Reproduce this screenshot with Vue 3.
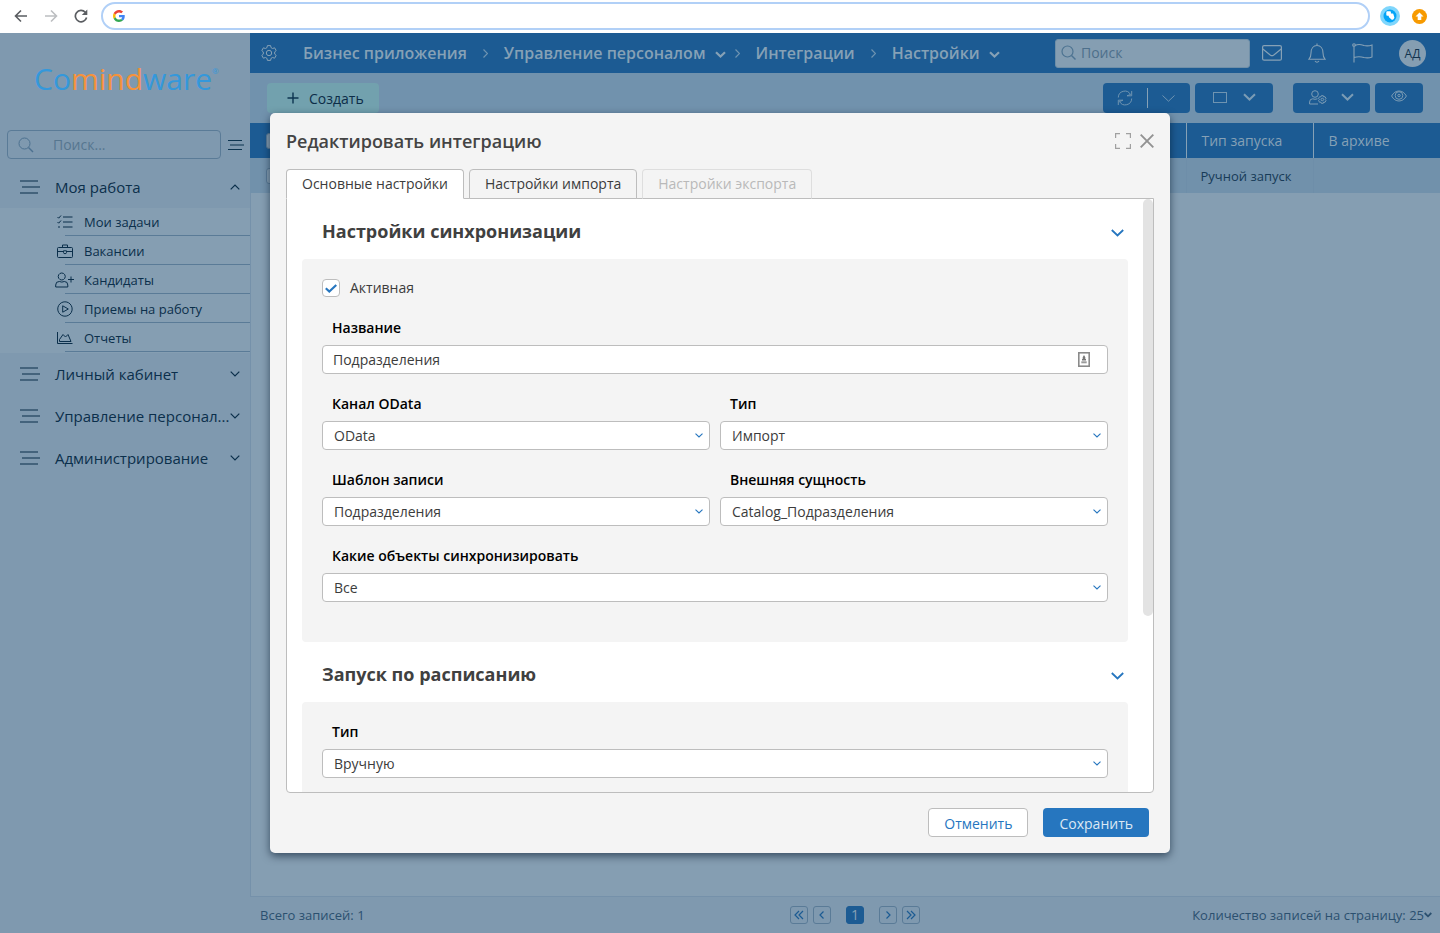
<script setup>
import { ref } from 'vue'

const navSearch = ref('')
const topSearch = ref('')
const active = ref(true)
const name = ref('Подразделения')

const tasks = [
  { icon: 'list', title: 'Мои задачи' },
  { icon: 'case', title: 'Вакансии' },
  { icon: 'user', title: 'Кандидаты' },
  { icon: 'play', title: 'Приемы на работу' },
  { icon: 'chart', title: 'Отчеты' },
]
const groups = ['Личный кабинет', 'Управление персонал...', 'Администрирование']
const crumbs = [
  { title: 'Бизнес приложения', menu: false },
  { title: 'Управление персоналом', menu: true },
  { title: 'Интеграции', menu: false },
  { title: 'Настройки', menu: true },
]
const selects = [
  { id: 'channel', label: 'Канал OData', value: 'OData', wide: false },
  { id: 'direction', label: 'Тип', value: 'Импорт', wide: false },
  { id: 'template', label: 'Шаблон записи', value: 'Подразделения', wide: false },
  { id: 'entity', label: 'Внешняя сущность', value: 'Catalog_Подразделения', wide: false },
  { id: 'objects', label: 'Какие объекты синхронизировать', value: 'Все', wide: true },
]
</script>

<template>
  <div class="page">
    <div class="browser">
      <button class="nav-btn" aria-label="Назад">
        <svg width="14" height="14" viewBox="0 0 14 14"><path d="M13 7H1.5M7 1.5L1.5 7L7 12.5" stroke="#5a5d61" stroke-width="1.6" /></svg>
      </button>
      <button class="nav-btn" aria-label="Вперед">
        <svg width="14" height="14" viewBox="0 0 14 14"><path d="M1 7h11.500M7 1.500L12.500 7L7 12.500" stroke="#bcbec1" stroke-width="1.600" /></svg>
      </button>
      <button class="nav-btn" aria-label="Обновить">
        <svg width="14" height="14" viewBox="0 0 14 14"><path d="M12.600 8.500A5.700 5.700 0 1 1 11.300 3.200" stroke="#5a5d61" stroke-width="1.700" /><path d="M13.300 0.500V6H7.800z" fill="#5a5d61" /></svg>
      </button>
      <div class="address">
        <svg width="12" height="12" viewBox="0 0 48 48">
          <path fill="#EA4335" d="M24 9.500c3.540 0 6.710 1.220 9.210 3.600l6.850-6.850C35.900 2.380 30.470 0 24 0 14.620 0 6.510 5.380 2.560 13.220l7.980 6.190C12.430 13.720 17.740 9.500 24 9.500z" />
          <path fill="#4285F4" d="M46.980 24.550c0-1.570-.15-3.090-.38-4.550H24v9.020h12.940c-.58 2.960-2.260 5.480-4.780 7.180l7.730 6c4.510-4.180 7.090-10.360 7.090-17.650z" />
          <path fill="#FBBC05" d="M10.530 28.590c-.48-1.450-.76-2.990-.76-4.590s.27-3.140.76-4.590l-7.980-6.190C.92 16.460 0 20.120 0 24c0 3.880.92 7.540 2.560 10.780l7.970-6.190z" />
          <path fill="#34A853" d="M24 48c6.480 0 11.930-2.130 15.890-5.810l-7.730-6c-2.150 1.450-4.920 2.300-8.160 2.300-6.260 0-11.570-4.220-13.470-9.910l-7.980 6.190C6.510 42.620 14.620 48 24 48z" />
        </svg>
        <input aria-label="Адресная строка" type="text" />
      </div>
      <svg class="ext" width="20" height="20" viewBox="0 0 20 20"><circle cx="10" cy="10" r="10" fill="#7fd6fc" /><circle cx="10" cy="10" r="6.500" fill="#03a5f7" /><path d="M6.300 6q.2-.8 1-.8h2.800q.8.200.8 1v1.200h1.600q1 .1 1 1l.9 3.200q-.2 1.200-1.200 1.800-1.200.8-2-.2L9 11.300 8.600 9.800H7.300q-1-.2-1-1z" fill="#fff" /></svg>
      <svg class="ext" width="15" height="15" viewBox="0 0 15 15"><circle cx="7.500" cy="7.500" r="7.500" fill="#f79a00" /><path d="M7.500 3.500l4 4H9.300v3.500H5.700V7.500H3.500z" fill="#fff" /></svg>
    </div>

    <div class="app">
      <aside class="sidebar">
        <div class="logo">Co<span>mind</span>ware<sup>®</sup></div>
        <div class="side-search">
          <label class="side-box">
            <svg width="16" height="16" viewBox="0 0 16 16"><circle cx="6.500" cy="6.500" r="5.500" stroke="#4c7190" /><path d="M10.500 10.500L15 15" stroke="#4c7190" stroke-width="1.400" /></svg>
            <input v-model="navSearch" type="text" placeholder="Поиск..." aria-label="Поиск по меню" />
          </label>
          <button aria-label="Свернуть меню">
            <svg width="16" height="12" viewBox="0 0 16 12"><path d="M0 1.500h14M2 6h14M0 10.500h14" stroke="#0c3450" stroke-width="1.100" /></svg>
          </button>
        </div>
        <nav>
          <button class="group">
            <svg width="20" height="14" viewBox="0 0 20 14"><path d="M0 1h18M2 7h18M0 13h18" stroke="#0b2f4b" stroke-width="1.100" /></svg>
            <span>Моя работа</span>
            <svg width="10" height="6" viewBox="0 0 10 6"><path d="M.7 5.300L5 1l4.300 4.300" stroke="#0b2f4b" stroke-width="1.200" /></svg>
          </button>
          <ul class="sub">
            <li v-for="t in tasks" :key="t.title">
              <a href="#">
                <svg width="20" height="16" viewBox="0 0 20 16" stroke="#0b2f4b">
                  <path v-if="t.icon === 'list'" d="M2.500 3l1.200 1.200L6 1.500M2.500 8l1.200 1.200L6 6.500M3 13h2M8 3h9.500M8 8h9.500M8 13h9.500" />
                  <path v-else-if="t.icon === 'case'" d="M3.500 4.500h13a1 1 0 0 1 1 1v8a1 1 0 0 1-1 1h-13a1 1 0 0 1-1-1v-8a1 1 0 0 1 1-1zM7.500 4.500V2h5v2.500M2.500 8.500h6m3 0h6M8.500 7.800v1.700a1.500 1.200 0 0 0 3 0V7.800z" />
                  <path v-else-if="t.icon === 'user'" d="M6.800 1a3.500 3.500 0 1 1-.1 0zM.7 15v-2a3.500 3.500 0 0 1 3.600-3.500l2.500.6 2.500-.6A3.500 3.500 0 0 1 12.800 13v2zM16 4.500v6M13 7.500h6" />
                  <path v-else-if="t.icon === 'play'" d="M10 .8a7.200 7.200 0 1 1-.1 0zM7.700 4.800v6.400L13.300 8z" />
                  <path v-else d="M2.500 2v11.500h15M4.500 11.500V9.500l3.500-5 2.500 2.500 2.500-2.500 3 7z" />
                </svg>
                {{ t.title }}
              </a>
            </li>
          </ul>
          <button v-for="g in groups" :key="g" class="group">
            <svg width="20" height="14" viewBox="0 0 20 14"><path d="M0 1h18M2 7h18M0 13h18" stroke="#0b2f4b" stroke-width="1.100" /></svg>
            <span>{{ g }}</span>
            <svg width="10" height="6" viewBox="0 0 10 6"><path d="M.7.700L5 5 9.300.7" stroke="#0b2f4b" stroke-width="1.200" /></svg>
          </button>
        </nav>
      </aside>

      <main class="main">
        <header class="top">
          <svg class="gear" width="16" height="16" viewBox="0 0 16 16" stroke="#86a1b6"><circle cx="8" cy="8" r="2.700" /><path d="M6.400.6h3.200l.4 2 1.600.9 2-.7 1.600 2.800-1.500 1.300v2.200l1.500 1.300-1.600 2.800-2-.7-1.600.9-.4 2H6.400l-.4-2-1.600-.9-2 .7L.8 10.400l1.500-1.300V6.900L.8 5.600l1.600-2.800 2 .7L6 2.600z" /></svg>
          <nav class="crumbs">
            <template v-for="(c, i) in crumbs" :key="c.title">
              <svg v-if="i" class="sep" :class="{ tight: crumbs[i - 1].menu }" width="5" height="9" viewBox="0 0 5 9"><path d="M.5.500l4 4-4 4" stroke="#6f94b1" stroke-width="1.200" /></svg>
              <a href="#">{{ c.title }}</a>
              <svg v-if="c.menu" class="drop" width="11" height="7" viewBox="0 0 11 7"><path d="M1 1.200l4.500 4.300L10 1.200" stroke="#86a1b6" stroke-width="2.200" /></svg>
            </template>
          </nav>
          <label class="top-search">
            <svg width="16" height="16" viewBox="0 0 16 16"><circle cx="6.500" cy="6.500" r="5.500" stroke="#4d7391" stroke-width="1.200" /><path d="M10.500 10.500L14.500 14.500" stroke="#4d7391" stroke-width="1.500" /></svg>
            <input v-model="topSearch" type="text" placeholder="Поиск" aria-label="Поиск" />
          </label>
          <div class="top-icons">
            <button aria-label="Почта"><svg width="20" height="16" viewBox="0 0 20 16" stroke="#86a1b6" stroke-width="1.200"><rect x=".6" y=".6" width="18.800" height="14.600" rx="1.500" /><path d="M.8 4l7.700 6.200q1.500 1 3 0L19.200 4" /></svg></button>
            <button aria-label="Уведомления"><svg width="18" height="20" viewBox="0 0 18 20" stroke="#86a1b6" stroke-width="1.100"><path d="M9 .5v2M1 16.200c2-2.200 2-3 2-6.200C3 5.500 5.500 2.500 9 2.500s6 3 6 7.500c0 3.200 0 4 2 6.200zM7 18q2 2.500 4 0" /></svg></button>
            <button aria-label="Флаг"><svg width="21" height="20" viewBox="0 0 21 20" stroke="#86a1b6" stroke-width="1.100"><circle cx="2" cy="2" r="1.300" /><path d="M2 3.300V19.500M3 2.500c4-2 6-1 9 0 3 .8 5 .6 8-.5v12c-3 1.200-5 1.200-8 .5-4-1.200-6-1.200-10 0" /></svg></button>
            <button class="avatar">АД</button>
          </div>
        </header>

        <div class="toolbar">
          <button class="create"><svg width="12" height="12" viewBox="0 0 12 12"><path d="M6 .5v11M.5 6h11" stroke="#0c3450" stroke-width="1.400" /></svg><span>Создать</span></button>
          <div class="tools">
            <button class="tool refresh" aria-label="Обновить список">
              <svg width="16" height="16" viewBox="0 0 16 16" stroke="#6f94b1"><path d="M1.300 7.500A6.500 6.500 0 0 1 13.500 4.500M14.700 1v4.800H10l3.500-1.300M14.700 8.500A6.500 6.500 0 0 1 2.500 11.500M1.300 15v-4.800H6L2.500 11.500" /></svg>
              <i></i>
              <svg width="13" height="7" viewBox="0 0 13 7"><path d="M.5.500l6 5.700 6-5.700" stroke="#6f94b1" /></svg>
            </button>
            <button class="tool view" aria-label="Вид">
              <svg width="14" height="11" viewBox="0 0 14 11"><rect x=".5" y=".5" width="13" height="10" stroke="#6f94b1" /></svg>
              <svg width="13" height="8" viewBox="0 0 13 8"><path d="M1 1.200l5.500 5.300L12 1.200" stroke="#7b9cb5" stroke-width="2" /></svg>
            </button>
            <button class="tool people" aria-label="Права доступа">
              <svg width="18" height="15" viewBox="0 0 18 15" stroke="#7b9cb5"><circle cx="6" cy="4" r="3.300" /><path d="M9 14H.6v-2A3.200 3.200 0 0 1 3.800 8.800l2.200.5 2.500-.5" /><circle cx="13.300" cy="9.500" r="1.300" /><path d="M12.300 5.700h2l.4 1.200 1.300-.2 1 1.700-.8 1.100.8 1.100-1 1.700-1.300-.2-.4 1.200h-2l-.4-1.200-1.300.2-1-1.700.8-1.100-.8-1.100 1-1.700 1.300.2z" /></svg>
              <svg width="13" height="8" viewBox="0 0 13 8"><path d="M1 1.200l5.500 5.300L12 1.200" stroke="#7b9cb5" stroke-width="2" /></svg>
            </button>
            <button class="tool eye" aria-label="Просмотр">
              <svg width="16" height="12" viewBox="0 0 16 12" stroke="#7b9cb5"><path d="M.6 6C2.500 2.600 5 1 8 1s5.500 1.600 7.400 5C13.500 9.400 11 11 8 11S2.500 9.400.6 6z" /><circle cx="8" cy="5.500" r="3.800" /><circle cx="8" cy="5.500" r="1.200" /></svg>
            </button>
          </div>
        </div>

        <table class="grid">
          <thead>
            <tr><th class="pick"><input type="checkbox" aria-label="Выбрать все" /></th><th></th><th class="launch">Тип запуска</th><th class="archive">В архиве</th></tr>
          </thead>
          <tbody>
            <tr><td class="pick"><input type="checkbox" aria-label="Выбрать запись" /></td><td></td><td class="launch">Ручной запуск</td><td class="archive"></td></tr>
          </tbody>
        </table>

        <footer class="foot">
          <span>Всего записей: 1</span>
          <div class="pager">
            <button aria-label="Первая"><svg width="10" height="10" viewBox="0 0 10 10"><path d="M5 1L1 5l4 4M9 1L5 5l4 4" /></svg></button>
            <button aria-label="Предыдущая"><svg width="10" height="10" viewBox="0 0 10 10"><path d="M6.500 1.500L3 5l3.500 3.500" /></svg></button>
            <button class="current">1</button>
            <button aria-label="Следующая"><svg width="10" height="10" viewBox="0 0 10 10"><path d="M3.500 1.500L7 5l-3.500 3.500" /></svg></button>
            <button aria-label="Последняя"><svg width="10" height="10" viewBox="0 0 10 10"><path d="M1 1l4 4-4 4M5 1l4 4-4 4" /></svg></button>
          </div>
          <button class="size">Количество записей на страницу: 25<svg width="8" height="6" viewBox="0 0 8 6"><path d="M.7 1L4 4.300 7.300 1" stroke="#2b506f" stroke-width="1.800" /></svg></button>
        </footer>
      </main>

      <div class="overlay">
        <section class="modal" role="dialog" aria-labelledby="modal-title">
          <header class="modal-head">
            <h2 id="modal-title">Редактировать интеграцию</h2>
            <button aria-label="Развернуть"><svg width="16" height="16" viewBox="0 0 16 16"><path d="M.6 5V.6H5M11 .6h4.400V5M15.400 11v4.400H11M5 15.400H.6V11" stroke="#a0a0a0" stroke-width="1.200" /></svg></button>
            <button aria-label="Закрыть"><svg width="14" height="14" viewBox="0 0 14 14"><path d="M.7.700l12.600 12.600M13.300.7L.7 13.300" stroke="#929292" stroke-width="1.900" /></svg></button>
          </header>
          <div class="tabs" role="tablist">
            <button class="on" role="tab" aria-selected="true">Основные настройки</button>
            <button role="tab">Настройки импорта</button>
            <button role="tab" disabled>Настройки экспорта</button>
          </div>
          <div class="panel">
            <div class="scroll">
              <h3><span>Настройки синхронизации</span><svg width="13" height="8" viewBox="0 0 13 8"><path d="M.8 1l5.700 5.500L12.200 1" stroke="#2676bf" stroke-width="1.800" /></svg></h3>
              <div class="box">
                <label class="check">
                  <input v-model="active" type="checkbox" />
                  <svg v-if="active" width="12" height="9" viewBox="0 0 12 9"><path d="M.8 4.200l3.500 3.300L11.300 1" stroke="#2676bf" stroke-width="2.200" /></svg>
                  <span>Активная</span>
                </label>
                <div class="field wide">
                  <label for="name">Название</label>
                  <div class="control">
                    <input id="name" v-model="name" type="text" />
                    <svg class="key" width="12" height="15" viewBox="0 0 12 15"><rect x=".8" y=".8" width="10.400" height="13.400" stroke="#8a8a8a" stroke-width="1.600" /><path d="M6 3l1.300 2.200v2H4.700v-2zM4 7h4v1.500H4z" fill="#777" /><path d="M3.300 9.300h5.400v2H3.300z" fill="#9a9a9a" /></svg>
                  </div>
                </div>
                <div v-for="s in selects" :key="s.id" class="field" :class="{ wide: s.wide }">
                  <label :for="s.id">{{ s.label }}</label>
                  <div class="control">
                    <select :id="s.id"><option>{{ s.value }}</option></select>
                    <svg class="arrow" width="8" height="5" viewBox="0 0 8 5"><path d="M.5.600L4 4 7.500.6" stroke="#2676bf" stroke-width="1.100" /></svg>
                  </div>
                </div>
              </div>
              <h3><span>Запуск по расписанию</span><svg width="13" height="8" viewBox="0 0 13 8"><path d="M.8 1l5.700 5.500L12.200 1" stroke="#2676bf" stroke-width="1.800" /></svg></h3>
              <div class="box">
                <div class="field wide">
                  <label for="schedule">Тип</label>
                  <div class="control">
                    <select id="schedule"><option>Вручную</option></select>
                    <svg class="arrow" width="8" height="5" viewBox="0 0 8 5"><path d="M.5.600L4 4 7.500.6" stroke="#2676bf" stroke-width="1.100" /></svg>
                  </div>
                </div>
              </div>
            </div>
            <div class="thumb"></div>
          </div>
          <div class="actions">
            <button class="cancel">Отменить</button>
            <button class="save">Сохранить</button>
          </div>
        </section>
      </div>
    </div>
  </div>
</template>

<style>
body { margin: 0; }
</style>

<style scoped>
* { box-sizing: border-box; }
svg { fill: none; flex: none; display: block; }
button, input, select { font: inherit; color: inherit; margin: 0; }
button { background: none; border: 0; padding: 0; cursor: pointer; white-space: nowrap; }
input { outline: none; }
a { color: inherit; text-decoration: none; }
.page { height: 100vh; display: flex; flex-direction: column; font-family: "Open Sans", "Noto Sans", sans-serif; font-size: 14px; line-height: 20px; background: #859eb2; overflow: hidden; }

.browser { height: 33px; flex: none; display: flex; align-items: center; padding: 0 13px 1px 14px; background: #fff; }
.nav-btn { margin-right: 16px; }
.nav-btn:nth-child(3) { margin-right: 13px; }
.address { flex: 1; height: 28px; display: flex; align-items: center; gap: 8px; border: 2px solid #b1d0f7; border-radius: 14px; padding: 0 10px; margin-right: 10px; }
.address input { flex: 1; border: 0; background: none; }
.ext + .ext { margin-left: 12px; }

.app { position: relative; flex: 1; display: flex; min-height: 0; }
.sidebar { width: 250px; flex: none; background: #7f99af; color: #0b2f4b; }
.logo { height: 97px; padding: 20px 0 0 34px; font-size: 30px; line-height: 52px; font-weight: 400; color: #3498db; white-space: nowrap; }
.logo span { color: #f5923c; }
.logo sup { font-size: 8px; line-height: 8px; vertical-align: 16px; }
.side-search { display: flex; align-items: center; gap: 7px; padding: 0 6px 0 7px; height: 29px; }
.side-box { flex: 1; height: 29px; display: flex; align-items: center; gap: 19px; padding-left: 10px; border: 1px solid #5a7b97; border-radius: 4px; min-width: 0; }
.side-box input { flex: 1; min-width: 0; border: 0; padding: 0; background: none; font-size: 14px; }
.side-box input::placeholder { color: #56768f; }
.sidebar nav { padding-top: 7px; }
.group { width: 100%; height: 42px; display: flex; align-items: center; padding: 0 10px 0 20px; text-align: left; font-size: 15px; }
.group span { flex: 1; margin-left: 15px; }
.sub { list-style: none; margin: 0; padding: 0 0 1px; background: #859eb2; display: flex; flex-direction: column; gap: 1px; font-size: 13px; }
.sub li { height: 28px; margin-left: 65px; border-bottom: 1px solid #5a7b97; }
.sub a { display: flex; align-items: center; gap: 9px; height: 28px; margin-left: -10px; }

.main { flex: 1; min-width: 0; display: flex; flex-direction: column; color: #173b58; box-shadow: inset 1px 0 #7591aa; }
.top { height: 40px; flex: none; display: flex; align-items: center; padding: 0 14px 0 11px; background: #1c5b93; color: #86a1b6; }
.crumbs { flex: 1; display: flex; align-items: center; margin-left: 26px; font-size: 16px; font-weight: 600; white-space: nowrap; }
.sep { margin: 0 16px; }
.sep.tight { margin: 0 16px 0 9px; }
.drop { margin-left: 9px; margin-top: 2px; }
.top-search { width: 195px; height: 29px; display: flex; align-items: center; gap: 4px; padding-left: 5px; background: #859eb2; border: 1px solid #6f8fa8; border-radius: 3px; }
.top-search input { flex: 1; min-width: 0; border: 0; padding: 0; background: none; }
.top-search input::placeholder { color: #4d6f8b; }
.top-icons { display: flex; align-items: center; gap: 26px; margin-left: 12px; }
.avatar { width: 27px; height: 27px; border-radius: 50%; background: #859eb2; color: #123450; font-size: 12px; line-height: 27px; }
.toolbar { height: 50px; flex: none; display: flex; justify-content: space-between; align-items: center; padding: 0 17px; background: #7192ad; }
.create { display: flex; align-items: center; gap: 10px; height: 30px; padding: 0 15px 0 20px; border-radius: 4px; background: #72a1ae; color: #0c2d48; }
.create span { padding-top: 2px; }
.tools { display: flex; gap: 5px; }
.tool { display: flex; align-items: center; justify-content: center; height: 30px; padding-bottom: 2px; border-radius: 4px; background: #1c5b93; }
.refresh { width: 87px; gap: 14px; padding: 0 1px 0 0; }
.refresh i { width: 1px; height: 20px; background: #86a1b6; }
.view { width: 78px; gap: 16px; }
.people { width: 77px; gap: 14px; margin-left: 15px; }
.eye { width: 48px; padding-bottom: 4px; }
.grid { width: 100%; border-collapse: collapse; table-layout: fixed; text-align: left; }
.grid th { height: 35px; padding: 0 0 0 15px; background: #1c5b93; color: #86a1b6; font-weight: 400; }
.grid th.launch, .grid th.archive { border-left: 1px solid #86a1b6; }
.grid td { height: 35px; padding: 0 0 0 14px; background: #7191ab; border-left: 1px solid #6e8ea9; font-size: 13px; }
.grid td:first-child { border-left: 0; }
.grid .launch { width: 127px; }
.grid .archive { width: 127px; }
.grid .pick { width: 45px; padding-left: 16px; }
.grid .pick input { display: block; width: 16px; height: 16px; appearance: none; border: 1px solid #5a7b97; border-radius: 3px; background: #859eb2; }
.foot { margin-top: auto; height: 37px; display: grid; grid-template-columns: 1fr auto 1fr; align-items: center; padding: 0 8px 0 10px; background: #7f99af; border-top: 1px solid #7591aa; font-size: 13px; color: #2b506f; }
.pager { display: flex; gap: 5px; margin-left: 18px; }
.pager button { width: 18px; height: 18px; display: flex; align-items: center; justify-content: center; border: 1px solid #5a7b97; border-radius: 3px; }
.pager path { stroke: #1c5b93; stroke-width: 1.2; }
.pager .current { margin: 0 10px; background: #1c5b93; border-color: #1c5b93; color: #86a1b6; font-size: 14px; }
.size { justify-self: end; display: flex; align-items: center; }

.overlay { position: absolute; inset: 0; display: flex; align-items: center; justify-content: center; }
.modal { width: 900px; max-width: 96%; height: calc(100% - 160px); display: flex; flex-direction: column; padding: 0 16px 16px; background: #f4f4f4; border-radius: 5px; box-shadow: 0 3px 9px rgba(0, 20, 40, 0.6); color: #3c3c3c; }
.modal-head { display: flex; align-items: center; gap: 9px; height: 56px; flex: none; }
.modal-head h2 { flex: 1; margin: 0; font-size: 18px; line-height: 24px; font-weight: 600; color: #444; }
.tabs { display: flex; gap: 5px; position: relative; z-index: 1; margin-bottom: -1px; }
.tabs button { height: 30px; padding: 0 15px; border: 1px solid #bdbdbd; border-radius: 4px 4px 0 0; background: #f4f4f4; }
.tabs .on { background: #fff; border-bottom-color: #fff; }
.tabs button:disabled { color: #b9b9b9; border-color: #dedede #dedede #bdbdbd; }
.panel { position: relative; flex: 1; min-height: 0; background: #fff; border: 1px solid #bdbdbd; border-radius: 0 0 4px 4px; overflow: hidden; }
.scroll { height: 100%; overflow: hidden; padding: 0 25px 0 15px; }
.thumb { position: absolute; top: 0; right: 0; width: 10px; height: 417px; border-radius: 5px; background: #e3e3e3; }
h3 { display: flex; align-items: center; justify-content: space-between; height: 60px; margin: 0; padding: 4px 4px 0 20px; font-size: 18px; line-height: 24px; font-weight: 700; color: #404040; }
h3 svg { margin-top: 4px; }
.box { display: grid; grid-template-columns: 1fr 1fr; gap: 20px 10px; padding: 20px 20px 40px; background: #f4f4f4; border-radius: 4px; }
.check { grid-column: 1 / -1; position: relative; display: flex; align-items: center; gap: 10px; height: 19px; padding-bottom: 1px; }
.check input { appearance: none; width: 18px; height: 18px; border: 1px solid #bdbdbd; border-radius: 4px; background: #fff; }
.check svg { position: absolute; left: 3px; top: 5px; }
.wide { grid-column: 1 / -1; }
.field { min-width: 0; }
.field label { display: block; margin: 0 0 7px 10px; font-weight: 600; color: #000; }
.control { position: relative; }
.control input, .control select { display: block; width: 100%; height: 29px; padding: 0 10px; border: 1px solid #bdbdbd; border-radius: 4px; background: #fff; color: #3c3c3c; outline: none; }
.control select { appearance: none; padding: 0 11px; }
.arrow { position: absolute; right: 7px; top: 12px; pointer-events: none; }
.key { position: absolute; right: 18px; top: 7px; }
.actions { display: flex; justify-content: flex-end; gap: 15px; padding: 15px 5px 0 0; }
.actions button { height: 29px; padding: 2px 16px 0; border-radius: 4px; }
.cancel { border: 1px solid #bdbdbd; background: #fff; color: #2676bf; }
.actions .cancel { padding: 2px 15px 0; }
.save { background: #2676bf; color: #dbe8f4; }
</style>
